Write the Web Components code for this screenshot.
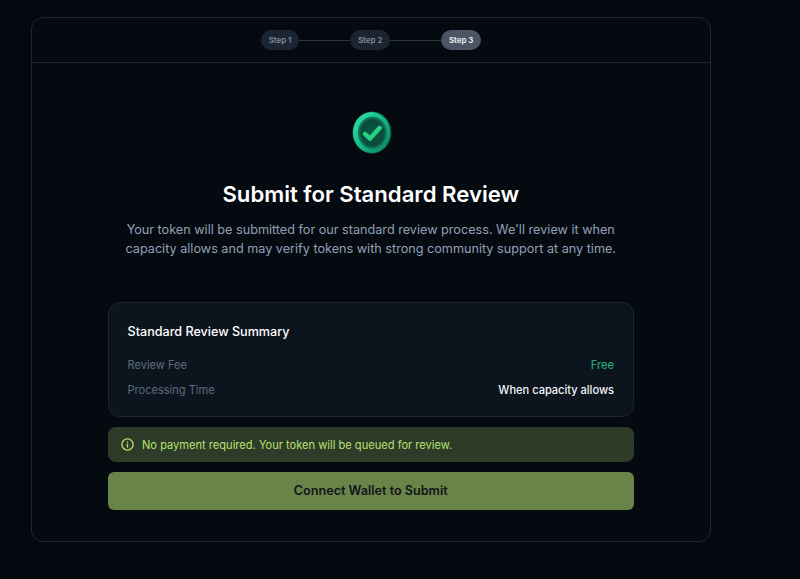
<!DOCTYPE html>
<html>
  <head>
    <meta charset="UTF-8" />
    <title>Submit for Standard Review</title>
    <style>
      html, body {
        margin: 0;
        height: 100%;
        background: #04080f;
        font-family: Inter, "Liberation Sans", sans-serif;
        overflow: hidden;
      }
      body {
        padding: 17px 0 0 31px;
        box-sizing: border-box;
      }
    </style>
  </head>

  <body>
    <review-panel>
      <step-bar slot="header">
        <step-pill>Step 1</step-pill>
        <step-pill>Step 2</step-pill>
        <step-pill active>Step 3</step-pill>
      </step-bar>
      <coin-icon slot="icon"></coin-icon>
      <h1 slot="title">Submit for Standard Review</h1>
      <p slot="lead">Your token will be submitted for our standard review process. We'll review it when<br />capacity allows and may verify tokens with strong community support at any time.</p>
      <summary-card heading="Standard Review Summary">
        <summary-row label="Review Fee" value="Free" tone="green"></summary-row>
        <summary-row label="Processing Time" value="When capacity allows"></summary-row>
      </summary-card>
      <info-alert>No payment required. Your token will be queued for review.</info-alert>
      <submit-button>Connect Wallet to Submit</submit-button>
    </review-panel>

    <script>
      class ReviewPanel extends HTMLElement {
        constructor() {
          super();
          const root = this.attachShadow({ mode: 'open' });
          root.innerHTML = `
            <style>
              :host {
                display: block;
                width: 680px;
                height: 525px;
                box-sizing: border-box;
                border: 1px solid #1e2733;
                border-radius: 12px;
                background: #050a11;
              }
              header {
                height: 45px;
                box-sizing: border-box;
                border-bottom: 1px solid #1e2733;
                display: flex;
                align-items: center;
                justify-content: center;
              }
              main {
                padding: 48px 76px 0 75.5px;
                display: flex;
                flex-direction: column;
                align-items: stretch;
              }
              .hero {
                display: flex;
                flex-direction: column;
                align-items: center;
                text-align: center;
                height: 191px;
              }
              ::slotted(h1) {
                margin: 23px 0 0;
                font-size: 22.15px;
                line-height: 32px;
                font-weight: 600;
                color: #ffffff;
              }
              ::slotted(p) {
                margin: 10px -20px 0;
                font-size: 12.65px;
                line-height: 19.2px;
                font-weight: 400;
                color: #91a0b6;
                white-space: nowrap;
              }
              .stack {
                display: flex;
                flex-direction: column;
                gap: 10px;
              }
            </style>
            <header><slot name="header"></slot></header>
            <main>
              <div class="hero">
                <slot name="icon"></slot>
                <slot name="title"></slot>
                <slot name="lead"></slot>
              </div>
              <div class="stack"><slot></slot></div>
            </main>
          `;
        }
      }
      customElements.define('review-panel', ReviewPanel);

      class StepBar extends HTMLElement {
        constructor() {
          super();
          this.attachShadow({ mode: 'open' }).innerHTML = `
            <style>
              :host {
                display: flex;
                align-items: center;
              }
            </style>
            <slot></slot>
          `;
        }
      }
      customElements.define('step-bar', StepBar);

      class StepPill extends HTMLElement {
        constructor() {
          super();
          this.attachShadow({ mode: 'open' }).innerHTML = `
            <style>
              :host {
                display: flex;
                align-items: center;
              }
              .pill {
                height: 20px;
                padding: 0 7.8px;
                border-radius: 10px;
                display: flex;
                align-items: center;
                font-size: 7.9px;
                font-weight: 600;
                background: #1b2431;
                color: #7f8ea3;
              }
              :host([active]) .pill {
                background: #4b5563;
                color: #f3f4f6;
              }
              .line {
                width: 51px;
                height: 1px;
                background: #2c3644;
              }
              :host([active]) .line {
                display: none;
              }
            </style>
            <div class="pill"><slot></slot></div>
            <div class="line"></div>
          `;
        }
      }
      customElements.define('step-pill', StepPill);

      class CoinIcon extends HTMLElement {
        constructor() {
          super();
          this.attachShadow({ mode: 'open' }).innerHTML = `
            <style>
              :host {
                display: block;
                width: 42px;
                height: 44px;
              }
              svg { display: block; }
            </style>
            <svg width="42" height="44" viewBox="0 0 42 44" fill="none">
              <defs>
                <linearGradient id="rim" x1="0" y1="0" x2="1" y2="1">
                  <stop offset="0" stop-color="#35e6ad" />
                  <stop offset="0.55" stop-color="#14b57f" />
                  <stop offset="1" stop-color="#0c7f5c" />
                </linearGradient>
                <radialGradient id="face" cx="0.5" cy="0.5" r="0.55">
                  <stop offset="0" stop-color="#0b5a46" />
                  <stop offset="0.7" stop-color="#0a4a3b" />
                  <stop offset="1" stop-color="#12a67b" />
                </radialGradient>
              </defs>
              <ellipse cx="22" cy="21.5" rx="19.5" ry="21" fill="#0b5c47" />
              <ellipse cx="21.6" cy="21.5" rx="18.6" ry="20.4" fill="url(#rim)" />
              <ellipse cx="22.4" cy="21.8" rx="14.6" ry="16.4" fill="url(#face)" />
              <path d="M15 23 L20 27.6 L29.8 16.8" stroke="#25d483" stroke-width="4.4" stroke-linecap="round" stroke-linejoin="round" />
            </svg>
          `;
        }
      }
      customElements.define('coin-icon', CoinIcon);

      class SummaryCard extends HTMLElement {
        constructor() {
          super();
          this.attachShadow({ mode: 'open' }).innerHTML = `
            <style>
              :host {
                display: block;
                box-sizing: border-box;
                height: 115px;
                padding: 20px 19px;
                border: 1px solid #1c2531;
                border-radius: 12px;
                background: #0c141d;
              }
              h2 {
                margin: 0 0 14px;
                font-size: 12.6px;
                line-height: 18px;
                font-weight: 500;
                color: #ffffff;
              }
              .rows {
                display: flex;
                flex-direction: column;
                gap: 5px;
              }
            </style>
            <h2>${this.getAttribute('heading')}</h2>
            <div class="rows"><slot></slot></div>
          `;
        }
      }
      customElements.define('summary-card', SummaryCard);

      class SummaryRow extends HTMLElement {
        constructor() {
          super();
          this.attachShadow({ mode: 'open' }).innerHTML = `
            <style>
              :host {
                display: flex;
                justify-content: space-between;
                align-items: center;
                height: 20px;
                font-size: 11.05px;
              }
              .label { color: #5d6b80; }
              .value { color: #f5f7fa; font-weight: 500; }
              :host([tone="green"]) .value { color: #2aa574; }
            </style>
            <span class="label">${this.getAttribute('label')}</span>
            <span class="value">${this.getAttribute('value')}</span>
          `;
        }
      }
      customElements.define('summary-row', SummaryRow);

      class InfoAlert extends HTMLElement {
        constructor() {
          super();
          this.attachShadow({ mode: 'open' }).innerHTML = `
            <style>
              :host {
                display: flex;
                align-items: center;
                gap: 8.5px;
                box-sizing: border-box;
                height: 35px;
                padding: 0 13px;
                border-radius: 8px;
                background: #2e3b29;
                color: #b5e26f;
                font-size: 11.1px;
              }
              svg { display: block; flex: none; }
            </style>
            <svg width="13" height="13" viewBox="0 0 13 13" fill="none" stroke="currentColor" stroke-width="1.3" stroke-linecap="round">
              <circle cx="6.5" cy="6.5" r="5.6" />
              <path d="M6.5 6.1V9" />
              <path d="M6.5 4V4.1" />
            </svg>
            <span><slot></slot></span>
          `;
        }
      }
      customElements.define('info-alert', InfoAlert);

      class SubmitButton extends HTMLElement {
        constructor() {
          super();
          this.attachShadow({ mode: 'open' }).innerHTML = `
            <style>
              :host {
                display: flex;
                align-items: center;
                justify-content: center;
                height: 37.5px;
                border-radius: 6px;
                background: #6a8349;
                color: #10151a;
                font-size: 12.6px;
                font-weight: 600;
              }
            </style>
            <slot></slot>
          `;
        }
      }
      customElements.define('submit-button', SubmitButton);
    </script>
  </body>
</html>
